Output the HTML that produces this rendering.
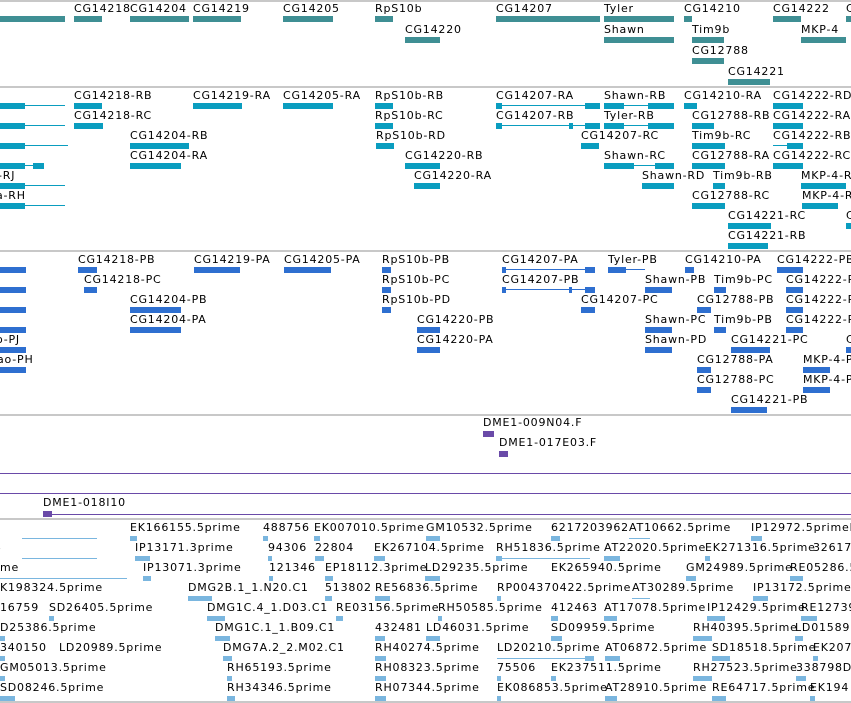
<!DOCTYPE html>
<html><head><meta charset="utf-8"><style>
*{margin:0;padding:0}
body{width:851px;height:703px;overflow:hidden;background:#fff;position:relative;font-family:"DejaVu Sans","Liberation Sans",sans-serif}
.l{position:absolute;font-size:11px;line-height:13px;letter-spacing:.8px;white-space:nowrap;color:#000}
.b{position:absolute;height:6px}
.t{background:#3f8f94}
.x{background:#0a9dbf}
.p{background:#2e6fd0}
.e{background:#7ab6df;height:5px}
.v{background:#6a4aa8}
.ln{position:absolute;height:1px}
.g{position:absolute;left:0;width:851px;height:2px;background:#c8c8c8}
</style></head><body>
<div class="g" style="top:0"></div>
<div class="g" style="top:86"></div>
<div class="g" style="top:86px"></div>
<div class="g" style="top:250px"></div>
<div class="g" style="top:414px"></div>
<div class="g" style="top:518px"></div>
<div class="g" style="top:701px"></div>
<div class="ln v" style="top:473px;left:0;width:851px"></div>
<div class="ln v" style="top:493px;left:0;width:851px"></div>

<!-- top gene track -->
<div class="b t" style="left:0;top:16px;width:65px"></div>
<span class="l" style="left:74px;top:2px">CG14218</span><div class="b t" style="left:74px;top:16px;width:28px"></div>
<span class="l" style="left:130px;top:2px">CG14204</span><div class="b t" style="left:130px;top:16px;width:59px"></div>
<span class="l" style="left:193px;top:2px">CG14219</span><div class="b t" style="left:193px;top:16px;width:48px"></div>
<span class="l" style="left:283px;top:2px">CG14205</span><div class="b t" style="left:283px;top:16px;width:50px"></div>
<span class="l" style="left:375px;top:2px">RpS10b</span><div class="b t" style="left:375px;top:16px;width:18px"></div>
<span class="l" style="left:496px;top:2px">CG14207</span><div class="b t" style="left:496px;top:16px;width:104px"></div>
<span class="l" style="left:604px;top:2px">Tyler</span><div class="b t" style="left:604px;top:16px;width:70px"></div>
<span class="l" style="left:684px;top:2px">CG14210</span><div class="b t" style="left:684px;top:16px;width:8px"></div>
<span class="l" style="left:773px;top:2px">CG14222</span><div class="b t" style="left:773px;top:16px;width:28px"></div>
<span class="l" style="left:846px;top:2px">C</span><div class="b t" style="left:846px;top:16px;width:5px"></div>
<span class="l" style="left:405px;top:23px">CG14220</span><div class="b t" style="left:405px;top:37px;width:35px"></div>
<span class="l" style="left:604px;top:23px">Shawn</span><div class="b t" style="left:604px;top:37px;width:70px"></div>
<span class="l" style="left:692px;top:23px">Tim9b</span><div class="b t" style="left:692px;top:37px;width:32px"></div>
<span class="l" style="left:801px;top:23px">MKP-4</span><div class="b t" style="left:801px;top:37px;width:45px"></div>
<span class="l" style="left:692px;top:44px">CG12788</span><div class="b t" style="left:692px;top:58px;width:32px"></div>
<span class="l" style="left:728px;top:65px">CG14221</span><div class="b t" style="left:728px;top:79px;width:42px"></div>

<!-- transcripts -->
<div class="ln x" style="left:0;top:105px;width:65px"></div><div class="b x" style="left:0;top:103px;width:25px"></div>
<div class="ln x" style="left:0;top:125px;width:65px"></div><div class="b x" style="left:0;top:123px;width:25px"></div>
<div class="ln x" style="left:0;top:145px;width:68px"></div><div class="b x" style="left:0;top:143px;width:25px"></div>
<div class="ln x" style="left:0;top:165px;width:44px"></div><div class="b x" style="left:33px;top:163px;width:11px"></div><div class="b x" style="left:0;top:163px;width:25px"></div>
<span class="l" style="left:-2px;top:169px">-RJ</span><div class="ln x" style="left:0;top:185px;width:65px"></div><div class="b x" style="left:0;top:183px;width:25px"></div>
<span class="l" style="left:-4px;top:189px">a-RH</span><div class="ln x" style="left:0;top:205px;width:65px"></div><div class="b x" style="left:0;top:203px;width:25px"></div>

<span class="l" style="left:74px;top:89px">CG14218-RB</span><div class="b x" style="left:74px;top:103px;width:28px"></div>
<span class="l" style="left:74px;top:109px">CG14218-RC</span><div class="b x" style="left:74px;top:123px;width:29px"></div>
<span class="l" style="left:130px;top:129px">CG14204-RB</span><div class="b x" style="left:130px;top:143px;width:59px"></div>
<span class="l" style="left:130px;top:149px">CG14204-RA</span><div class="b x" style="left:130px;top:163px;width:51px"></div>
<span class="l" style="left:193px;top:89px">CG14219-RA</span><div class="b x" style="left:193px;top:103px;width:49px"></div>
<span class="l" style="left:283px;top:89px">CG14205-RA</span><div class="b x" style="left:283px;top:103px;width:50px"></div>
<span class="l" style="left:375px;top:89px">RpS10b-RB</span><div class="b x" style="left:375px;top:103px;width:18px"></div>
<span class="l" style="left:375px;top:109px">RpS10b-RC</span><div class="b x" style="left:375px;top:123px;width:18px"></div>
<span class="l" style="left:376px;top:129px">RpS10b-RD</span><div class="b x" style="left:376px;top:143px;width:18px"></div>
<span class="l" style="left:405px;top:149px">CG14220-RB</span><div class="b x" style="left:405px;top:163px;width:35px"></div>
<span class="l" style="left:414px;top:169px">CG14220-RA</span><div class="b x" style="left:414px;top:183px;width:26px"></div>
<span class="l" style="left:496px;top:89px">CG14207-RA</span><div class="ln x" style="left:496px;top:105px;width:104px"></div><div class="b x" style="left:496px;top:103px;width:6px"></div><div class="b x" style="left:585px;top:103px;width:15px"></div>
<span class="l" style="left:496px;top:109px">CG14207-RB</span><div class="ln x" style="left:496px;top:125px;width:104px"></div><div class="b x" style="left:496px;top:123px;width:6px"></div><div class="b x" style="left:569px;top:123px;width:4px"></div><div class="b x" style="left:585px;top:123px;width:15px"></div>
<span class="l" style="left:581px;top:129px">CG14207-RC</span><div class="b x" style="left:581px;top:143px;width:18px"></div>
<span class="l" style="left:604px;top:89px">Shawn-RB</span><div class="ln x" style="left:604px;top:105px;width:70px"></div><div class="b x" style="left:604px;top:103px;width:20px"></div><div class="b x" style="left:648px;top:103px;width:26px"></div>
<span class="l" style="left:604px;top:109px">Tyler-RB</span><div class="ln x" style="left:604px;top:125px;width:70px"></div><div class="b x" style="left:604px;top:123px;width:20px"></div><div class="b x" style="left:648px;top:123px;width:26px"></div>
<span class="l" style="left:604px;top:149px">Shawn-RC</span><div class="ln x" style="left:604px;top:165px;width:70px"></div><div class="b x" style="left:604px;top:163px;width:30px"></div><div class="b x" style="left:655px;top:163px;width:19px"></div>
<span class="l" style="left:642px;top:169px">Shawn-RD</span><div class="b x" style="left:642px;top:183px;width:32px"></div>
<span class="l" style="left:684px;top:89px">CG14210-RA</span><div class="b x" style="left:684px;top:103px;width:13px"></div>
<span class="l" style="left:692px;top:109px">CG12788-RB</span><div class="b x" style="left:692px;top:123px;width:22px"></div>
<span class="l" style="left:692px;top:129px">Tim9b-RC</span><div class="b x" style="left:692px;top:143px;width:33px"></div>
<span class="l" style="left:692px;top:149px">CG12788-RA</span><div class="b x" style="left:692px;top:163px;width:33px"></div>
<span class="l" style="left:713px;top:169px">Tim9b-RB</span><div class="b x" style="left:713px;top:183px;width:12px"></div>
<span class="l" style="left:692px;top:189px">CG12788-RC</span><div class="b x" style="left:692px;top:203px;width:33px"></div>
<span class="l" style="left:728px;top:209px">CG14221-RC</span><div class="b x" style="left:728px;top:223px;width:43px"></div>
<span class="l" style="left:728px;top:229px">CG14221-RB</span><div class="b x" style="left:728px;top:243px;width:40px"></div>
<span class="l" style="left:773px;top:89px">CG14222-RD</span><div class="b x" style="left:773px;top:103px;width:30px"></div>
<span class="l" style="left:773px;top:109px">CG14222-RA</span><div class="b x" style="left:773px;top:123px;width:30px"></div>
<span class="l" style="left:773px;top:129px">CG14222-RB</span><div class="ln x" style="left:773px;top:145px;width:30px"></div><div class="b x" style="left:787px;top:143px;width:16px"></div>
<span class="l" style="left:773px;top:149px">CG14222-RC</span><div class="b x" style="left:773px;top:163px;width:30px"></div>
<span class="l" style="left:801px;top:169px">MKP-4-R</span><div class="b x" style="left:801px;top:183px;width:45px"></div>
<span class="l" style="left:802px;top:189px">MKP-4-R</span><div class="b x" style="left:802px;top:203px;width:36px"></div>
<span class="l" style="left:846px;top:209px">C</span><div class="b x" style="left:846px;top:223px;width:5px"></div>

<!-- proteins -->
<div class="b p" style="left:0;top:267px;width:26px"></div>
<div class="b p" style="left:0;top:287px;width:26px"></div>
<div class="b p" style="left:0;top:307px;width:26px"></div>
<div class="b p" style="left:0;top:327px;width:26px"></div>
<span class="l" style="left:-4px;top:333px">o-PJ</span><div class="b p" style="left:0;top:347px;width:26px"></div>
<span class="l" style="left:-3px;top:353px">ao-PH</span><div class="b p" style="left:0;top:367px;width:26px"></div>
<span class="l" style="left:78px;top:253px">CG14218-PB</span><div class="b p" style="left:78px;top:267px;width:19px"></div>
<span class="l" style="left:84px;top:273px">CG14218-PC</span><div class="b p" style="left:84px;top:287px;width:13px"></div>
<span class="l" style="left:130px;top:293px">CG14204-PB</span><div class="b p" style="left:130px;top:307px;width:51px"></div>
<span class="l" style="left:130px;top:313px">CG14204-PA</span><div class="b p" style="left:130px;top:327px;width:51px"></div>
<span class="l" style="left:194px;top:253px">CG14219-PA</span><div class="b p" style="left:194px;top:267px;width:46px"></div>
<span class="l" style="left:284px;top:253px">CG14205-PA</span><div class="b p" style="left:284px;top:267px;width:47px"></div>
<span class="l" style="left:382px;top:253px">RpS10b-PB</span><div class="b p" style="left:382px;top:267px;width:9px"></div>
<span class="l" style="left:382px;top:273px">RpS10b-PC</span><div class="b p" style="left:382px;top:287px;width:9px"></div>
<span class="l" style="left:382px;top:293px">RpS10b-PD</span><div class="b p" style="left:382px;top:307px;width:9px"></div>
<span class="l" style="left:417px;top:313px">CG14220-PB</span><div class="b p" style="left:417px;top:327px;width:23px"></div>
<span class="l" style="left:417px;top:333px">CG14220-PA</span><div class="b p" style="left:417px;top:347px;width:23px"></div>
<span class="l" style="left:502px;top:253px">CG14207-PA</span><div class="ln p" style="left:502px;top:269px;width:93px"></div><div class="b p" style="left:502px;top:267px;width:4px"></div><div class="b p" style="left:585px;top:267px;width:10px"></div>
<span class="l" style="left:502px;top:273px">CG14207-PB</span><div class="ln p" style="left:502px;top:289px;width:93px"></div><div class="b p" style="left:502px;top:287px;width:4px"></div><div class="b p" style="left:569px;top:287px;width:3px"></div><div class="b p" style="left:585px;top:287px;width:10px"></div>
<span class="l" style="left:581px;top:293px">CG14207-PC</span><div class="b p" style="left:581px;top:307px;width:14px"></div>
<span class="l" style="left:608px;top:253px">Tyler-PB</span><div class="ln p" style="left:608px;top:269px;width:37px"></div><div class="b p" style="left:608px;top:267px;width:18px"></div>
<span class="l" style="left:645px;top:273px">Shawn-PB</span><div class="b p" style="left:645px;top:287px;width:27px"></div>
<span class="l" style="left:645px;top:313px">Shawn-PC</span><div class="b p" style="left:645px;top:327px;width:27px"></div>
<span class="l" style="left:645px;top:333px">Shawn-PD</span><div class="b p" style="left:645px;top:347px;width:27px"></div>
<span class="l" style="left:685px;top:253px">CG14210-PA</span><div class="b p" style="left:685px;top:267px;width:9px"></div>
<span class="l" style="left:714px;top:273px">Tim9b-PC</span><div class="b p" style="left:714px;top:287px;width:12px"></div>
<span class="l" style="left:697px;top:293px">CG12788-PB</span><div class="b p" style="left:697px;top:307px;width:14px"></div>
<span class="l" style="left:714px;top:313px">Tim9b-PB</span><div class="b p" style="left:714px;top:327px;width:12px"></div>
<span class="l" style="left:731px;top:333px">CG14221-PC</span><div class="b p" style="left:731px;top:347px;width:39px"></div>
<span class="l" style="left:697px;top:353px">CG12788-PA</span><div class="b p" style="left:697px;top:367px;width:14px"></div>
<span class="l" style="left:697px;top:373px">CG12788-PC</span><div class="b p" style="left:697px;top:387px;width:14px"></div>
<span class="l" style="left:731px;top:393px">CG14221-PB</span><div class="b p" style="left:731px;top:407px;width:36px"></div>
<span class="l" style="left:777px;top:253px">CG14222-PB</span><div class="b p" style="left:777px;top:267px;width:26px"></div>
<span class="l" style="left:786px;top:273px">CG14222-P</span><div class="b p" style="left:786px;top:287px;width:17px"></div>
<span class="l" style="left:786px;top:293px">CG14222-P</span><div class="b p" style="left:786px;top:307px;width:17px"></div>
<span class="l" style="left:786px;top:313px">CG14222-P</span><div class="b p" style="left:786px;top:327px;width:17px"></div>
<span class="l" style="left:846px;top:333px">C</span><div class="b p" style="left:846px;top:347px;width:5px"></div>
<span class="l" style="left:803px;top:353px">MKP-4-P</span><div class="b p" style="left:803px;top:367px;width:27px"></div>
<span class="l" style="left:803px;top:373px">MKP-4-P</span><div class="b p" style="left:803px;top:387px;width:27px"></div>

<!-- DME -->
<span class="l" style="left:483px;top:416px">DME1-009N04.F</span><div class="b v" style="left:483px;top:431px;width:11px"></div>
<span class="l" style="left:499px;top:436px">DME1-017E03.F</span><div class="b v" style="left:499px;top:451px;width:9px"></div>
<span class="l" style="left:43px;top:496px">DME1-018I10</span><div class="ln v" style="left:43px;top:514px;width:808px"></div><div class="b v" style="left:43px;top:511px;width:9px"></div>

<!-- ESTs -->
<div class="ln e" style="left:22px;top:538px;width:75px;height:1px"></div>
<div class="ln e" style="left:22px;top:558px;width:75px;height:1px"></div>
<div class="ln e" style="left:0;top:578px;width:127px;height:1px"></div>
<span class="l" style="left:130px;top:521px">EK166155.5prime</span><div class="b e" style="left:130px;top:536px;width:7px"></div>
<span class="l" style="left:263px;top:521px">488756</span><div class="b e" style="left:263px;top:536px;width:5px"></div>
<span class="l" style="left:314px;top:521px">EK007010.5prime</span><div class="b e" style="left:314px;top:536px;width:6px"></div>
<span class="l" style="left:426px;top:521px">GM10532.5prime</span><div class="b e" style="left:426px;top:536px;width:14px"></div>
<span class="l" style="left:551px;top:521px">6217203962</span><div class="b e" style="left:551px;top:536px;width:9px"></div>
<span class="l" style="left:629px;top:521px">AT10662.5prime</span><div class="ln e" style="left:629px;top:538px;width:21px;height:1px"></div>
<span class="l" style="left:751px;top:521px">IP12972.5primeb</span><div class="b e" style="left:751px;top:536px;width:11px"></div>

<span class="l" style="left:-6px;top:541px">3</span>
<span class="l" style="left:135px;top:541px">IP13171.3prime</span><div class="b e" style="left:135px;top:556px;width:15px"></div>
<span class="l" style="left:268px;top:541px">94306</span><div class="b e" style="left:268px;top:556px;width:4px"></div>
<span class="l" style="left:315px;top:541px">22804</span><div class="b e" style="left:315px;top:556px;width:9px"></div>
<span class="l" style="left:374px;top:541px">EK267104.5prime</span><div class="b e" style="left:374px;top:556px;width:11px"></div>
<span class="l" style="left:496px;top:541px">RH51836.5prime</span><div class="ln e" style="left:496px;top:558px;width:94px;height:1px"></div><div class="b e" style="left:496px;top:556px;width:6px"></div>
<span class="l" style="left:604px;top:541px">AT22020.5prime</span><div class="b e" style="left:604px;top:556px;width:16px"></div>
<span class="l" style="left:705px;top:541px">EK271316.5prime</span><div class="b e" style="left:705px;top:556px;width:5px"></div>
<span class="l" style="left:813px;top:541px">32617</span>

<span class="l" style="left:0;top:561px">me</span>
<span class="l" style="left:143px;top:561px">IP13071.3prime</span><div class="b e" style="left:143px;top:576px;width:8px"></div>
<span class="l" style="left:269px;top:561px">121346</span><div class="b e" style="left:269px;top:576px;width:4px"></div>
<span class="l" style="left:325px;top:561px">EP18112.3prime</span><div class="b e" style="left:325px;top:576px;width:8px"></div>
<span class="l" style="left:425px;top:561px">LD29235.5prime</span><div class="b e" style="left:425px;top:576px;width:15px"></div>
<span class="l" style="left:551px;top:561px">EK265940.5prime</span>
<span class="l" style="left:686px;top:561px">GM24989.5prime</span><div class="b e" style="left:686px;top:576px;width:10px"></div>
<span class="l" style="left:790px;top:561px">RE05286.5</span><div class="b e" style="left:790px;top:576px;width:13px"></div>

<span class="l" style="left:0;top:581px">K198324.5prime</span>
<span class="l" style="left:188px;top:581px">DMG2B.1_1.N20.C1</span><div class="b e" style="left:188px;top:596px;width:24px"></div>
<span class="l" style="left:325px;top:581px">513802</span><div class="b e" style="left:325px;top:596px;width:7px"></div>
<span class="l" style="left:375px;top:581px">RE56836.5prime</span><div class="b e" style="left:375px;top:596px;width:15px"></div>
<span class="l" style="left:497px;top:581px">RP004370422.5prime</span><div class="b e" style="left:497px;top:596px;width:4px"></div>
<span class="l" style="left:632px;top:581px">AT30289.5prime</span><div class="ln e" style="left:632px;top:598px;width:18px;height:1px"></div>
<span class="l" style="left:753px;top:581px">IP13172.5prime</span><div class="b e" style="left:753px;top:596px;width:15px"></div>

<span class="l" style="left:0;top:601px">16759</span>
<span class="l" style="left:49px;top:601px">SD26405.5prime</span><div class="b e" style="left:49px;top:616px;width:5px"></div>
<span class="l" style="left:207px;top:601px">DMG1C.4_1.D03.C1</span><div class="b e" style="left:207px;top:616px;width:18px"></div>
<span class="l" style="left:336px;top:601px">RE03156.5prime</span><div class="b e" style="left:336px;top:616px;width:7px"></div>
<span class="l" style="left:438px;top:601px">RH50585.5prime</span><div class="b e" style="left:438px;top:616px;width:4px"></div>
<span class="l" style="left:551px;top:601px">412463</span><div class="b e" style="left:551px;top:616px;width:7px"></div>
<span class="l" style="left:604px;top:601px">AT17078.5prime</span><div class="b e" style="left:604px;top:616px;width:13px"></div>
<span class="l" style="left:707px;top:601px">IP12429.5prime</span><div class="b e" style="left:707px;top:616px;width:18px"></div>
<span class="l" style="left:801px;top:601px">RE12739</span><div class="b e" style="left:801px;top:616px;width:16px"></div>

<span class="l" style="left:0;top:621px">D25386.5prime</span><div class="b e" style="left:0;top:636px;width:5px"></div>
<span class="l" style="left:215px;top:621px">DMG1C.1_1.B09.C1</span><div class="b e" style="left:215px;top:636px;width:15px"></div>
<span class="l" style="left:375px;top:621px">432481</span><div class="b e" style="left:375px;top:636px;width:10px"></div>
<span class="l" style="left:426px;top:621px">LD46031.5prime</span><div class="b e" style="left:426px;top:636px;width:14px"></div>
<span class="l" style="left:551px;top:621px">SD09959.5prime</span><div class="b e" style="left:551px;top:636px;width:11px"></div>
<span class="l" style="left:693px;top:621px">RH40395.5prime</span><div class="b e" style="left:693px;top:636px;width:19px"></div>
<span class="l" style="left:795px;top:621px">LD01589</span><div class="b e" style="left:795px;top:636px;width:8px"></div>

<span class="l" style="left:0;top:641px">340150</span><div class="b e" style="left:0;top:656px;width:5px"></div>
<span class="l" style="left:59px;top:641px">LD20989.5prime</span>
<span class="l" style="left:223px;top:641px">DMG7A.2_2.M02.C1</span><div class="b e" style="left:223px;top:656px;width:9px"></div>
<span class="l" style="left:375px;top:641px">RH40274.5prime</span><div class="b e" style="left:375px;top:656px;width:11px"></div>
<span class="l" style="left:497px;top:641px">LD20210.5prime</span><div class="ln e" style="left:497px;top:658px;width:97px;height:1px"></div><div class="b e" style="left:585px;top:656px;width:9px"></div>
<span class="l" style="left:605px;top:641px">AT06872.5prime</span><div class="b e" style="left:605px;top:656px;width:15px"></div>
<span class="l" style="left:712px;top:641px">SD18518.5prime</span><div class="b e" style="left:712px;top:656px;width:18px"></div>
<span class="l" style="left:813px;top:641px">EK207</span><div class="b e" style="left:813px;top:656px;width:5px"></div>

<span class="l" style="left:0;top:661px">GM05013.5prime</span><div class="b e" style="left:0;top:676px;width:5px"></div>
<span class="l" style="left:227px;top:661px">RH65193.5prime</span><div class="b e" style="left:227px;top:676px;width:5px"></div>
<span class="l" style="left:375px;top:661px">RH08323.5prime</span><div class="b e" style="left:375px;top:676px;width:11px"></div>
<span class="l" style="left:497px;top:661px">75506</span><div class="b e" style="left:497px;top:676px;width:4px"></div>
<span class="l" style="left:551px;top:661px">EK237511.5prime</span><div class="b e" style="left:551px;top:676px;width:5px"></div>
<span class="l" style="left:693px;top:661px">RH27523.5prime</span><div class="b e" style="left:693px;top:676px;width:19px"></div>
<span class="l" style="left:796px;top:661px">338798D</span><div class="b e" style="left:796px;top:676px;width:10px"></div>

<span class="l" style="left:0;top:681px">SD08246.5prime</span><div class="b e" style="left:0;top:696px;width:15px"></div>
<span class="l" style="left:227px;top:681px">RH34346.5prime</span><div class="b e" style="left:227px;top:696px;width:8px"></div>
<span class="l" style="left:375px;top:681px">RH07344.5prime</span><div class="b e" style="left:375px;top:696px;width:11px"></div>
<span class="l" style="left:497px;top:681px">EK086853.5prime</span><div class="b e" style="left:497px;top:696px;width:4px"></div>
<span class="l" style="left:605px;top:681px">AT28910.5prime</span><div class="b e" style="left:605px;top:696px;width:12px"></div>
<span class="l" style="left:712px;top:681px">RE64717.5prime</span><div class="b e" style="left:712px;top:696px;width:14px"></div>
<span class="l" style="left:810px;top:681px">EK194</span><div class="b e" style="left:810px;top:696px;width:5px"></div>
</body></html>
